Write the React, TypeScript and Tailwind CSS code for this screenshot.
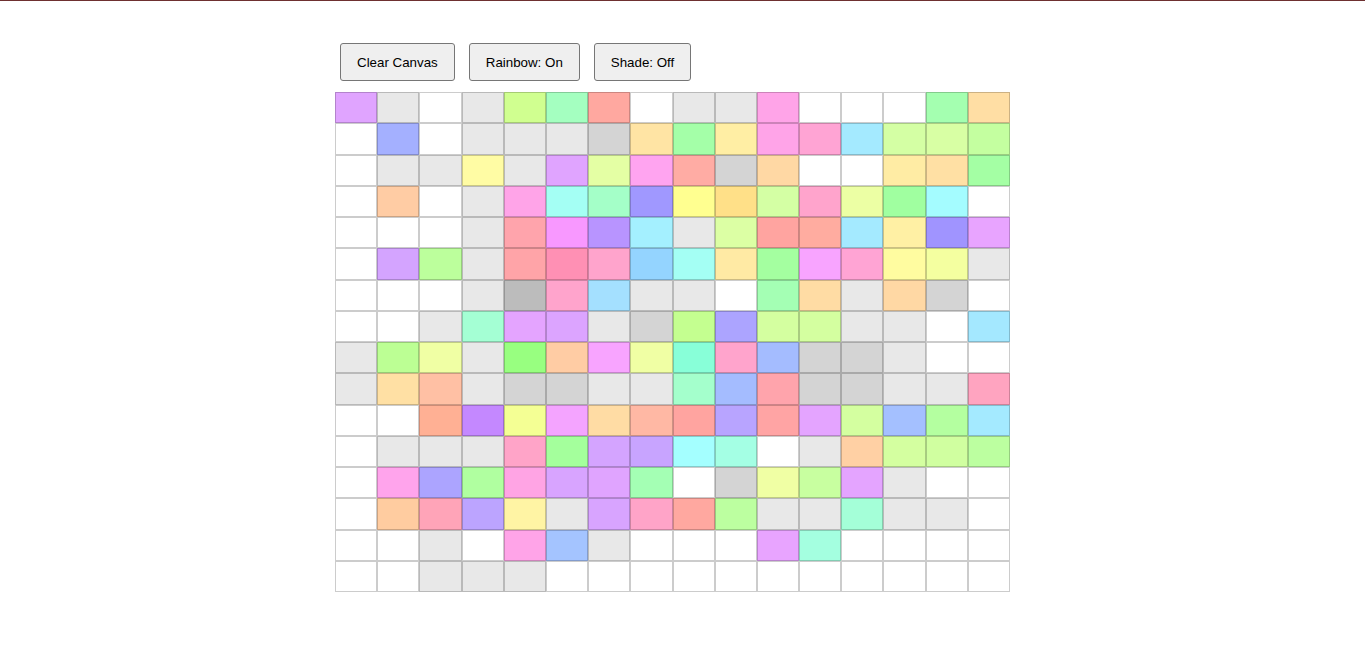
const W = "#ffffff";
const G = "#e8e8e8";
const D = "#d4d4d4";

const rows: string[][] = [
  ["#e0a4ff", G, W, G, "#d0ff90", "#a4ffc0", "#ffa8a0", W, G, G, "#ffa4e8", W, W, W, "#a4ffb0", "#ffdea4"],
  [W, "#a4b0ff", W, G, G, G, D, "#ffe4a4", "#a4ffa8", "#ffeea4", "#ffa4e8", "#ffa4d4", "#a4eaff", "#d4ffa4", "#d8ffa4", "#c4ffa0"],
  [W, G, G, "#fffca4", G, "#e0a4ff", "#e4ffa4", "#ffa4f0", "#ffaca4", D, "#ffd8a4", W, W, "#ffeca4", "#ffe0a4", "#a4ffa4"],
  [W, "#ffcca4", W, G, "#ffa4e8", "#a4fff4", "#a4ffc8", "#a098ff", "#ffff90", "#ffe088", "#d4ffa4", "#ffa4cc", "#ecffa4", "#a0ffa0", "#a4fcff", W],
  [W, W, W, G, "#ffa4ac", "#f898ff", "#b894ff", "#a4f0ff", G, "#dcffa4", "#ffa4a0", "#ffaca0", "#a4eaff", "#fff0a4", "#a094ff", "#e8a4ff"],
  [W, "#d4a4ff", "#bcff9c", G, "#ffa4a8", "#ff90b4", "#ffa4cc", "#94d4ff", "#a4fff4", "#ffeaa4", "#a4ffa0", "#f8a4ff", "#ffa4d4", "#fffca0", "#f4ffa0", G],
  [W, W, W, G, "#bcbcbc", "#ffa4cc", "#a4e0ff", G, G, W, "#a4ffb4", "#ffdca4", G, "#ffd8a4", D, W],
  [W, W, G, "#a4ffd4", "#e4a4ff", "#dca4ff", G, D, "#c4ff90", "#aca4ff", "#d4ffa0", "#d4ffa0", G, G, W, "#a4e8ff"],
  [G, "#bcff94", "#f0ffa4", G, "#98ff80", "#ffcca4", "#f8a4ff", "#f0ffa4", "#88ffd8", "#ffa4cc", "#a4bcff", D, D, G, W, W],
  [G, "#ffe0a4", "#ffc0a4", G, D, D, G, G, "#a4ffcc", "#a4bcff", "#ffa4ac", D, D, G, G, "#ffa4c0"],
  [W, W, "#ffb094", "#c488ff", "#f4ff94", "#f4a4ff", "#ffdca4", "#ffb8a4", "#ffa4a0", "#b8a4ff", "#ffa4a4", "#e4a4ff", "#d4ffa0", "#a4c0ff", "#b4ffa0", "#a4eaff"],
  [W, G, G, G, "#ffa4c8", "#a4ff9c", "#d4a4ff", "#c8a4ff", "#a4ffff", "#a4ffe4", W, G, "#ffd0a4", "#d4ffa0", "#d0ffa0", "#bcffa0"],
  [W, "#ffa4ec", "#aca4ff", "#b0ffa0", "#ffa4e4", "#d8a4ff", "#e0a4ff", "#a4ffb4", W, D, "#f0ffa4", "#c8ffa0", "#e4a4ff", G, W, W],
  [W, "#ffcca0", "#ffa4b8", "#bca4ff", "#fff4a4", G, "#d8a4ff", "#ffa4c8", "#ffa8a0", "#bcffa0", G, G, "#a4ffd8", G, G, W],
  [W, W, G, W, "#ffa4e8", "#a4c4ff", G, W, W, W, "#e8a4ff", "#a4ffe0", W, W, W, W],
  [W, W, G, G, G, W, W, W, W, W, W, W, W, W, W, W],
];

function ToolButton({ label }: { label: string }) {
  return (
    <button className="h-[38px] px-4 pt-[2px] bg-[#efefef] border border-[#767676] rounded-[3px] text-[13.33px] text-black font-['Liberation_Sans',Arial,sans-serif]">
      {label}
    </button>
  );
}

export default function App() {
  return (
    <div className="min-h-[670px] bg-white border-t border-[#6e3030]">
      <div className="flex gap-[14px] ml-[340px] pt-[42px]">
        <ToolButton label="Clear Canvas" />
        <ToolButton label="Rainbow: On" />
        <ToolButton label="Shade: Off" />
      </div>
      <div className="ml-[335px] mt-[11px] w-[675px] h-[500px] grid grid-cols-16 grid-rows-16">
        {rows.flatMap((row, r) =>
          row.map((color, c) => (
            <div
              key={`${r}-${c}`}
              className="border border-black/20"
              style={{ backgroundColor: color }}
            />
          ))
        )}
      </div>
    </div>
  );
}
